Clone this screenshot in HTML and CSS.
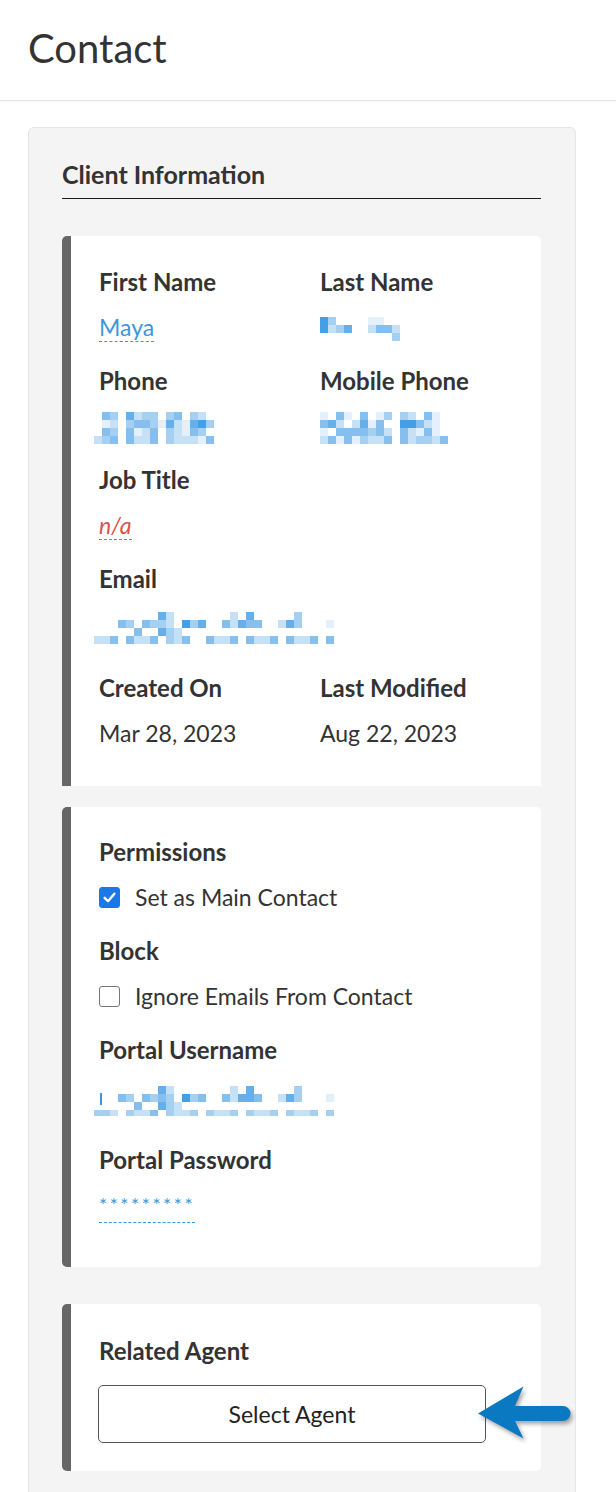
FILE: index.html
```html
<!DOCTYPE html>
<html lang="en">
<head>
<meta charset="utf-8">
<title>Contact</title>
<link rel="stylesheet" href="styles.css">
</head>
<body>
<header class="page-header">
  <h1 class="page-title">Contact</h1>
</header>
<main class="page-main">
  <section class="panel">
    <h2 class="panel-title">Client Information</h2>

    <div class="card card-info">
      <div class="grid-2">
        <div class="field">
          <div class="label">First Name</div>
          <div class="value"><span class="link">Maya</span></div>
        </div>
        <div class="field">
          <div class="label">Last Name</div>
          <div class="value value-mosaic off-6">
            <div class="mosaic m10">
              <i class="c6"></i><i class="c3"></i><i></i><i></i><i></i><i></i><i class="c1"></i><i class="c1"></i><i></i><i></i>
              <i class="c6"></i><i class="c2"></i><i class="c3"></i><i class="c5"></i><i></i><i></i><i class="c2"></i><i class="c4"></i><i class="c4"></i><i class="c2"></i>
              <i></i><i></i><i></i><i></i><i></i><i></i><i></i><i></i><i></i><i class="c3"></i>
            </div>
          </div>
        </div>
        <div class="field">
          <div class="label">Phone</div>
          <div class="value value-mosaic off-2 shift">
            <div class="mosaic m15">
              <i></i><i class="c4"></i><i class="c3"></i><i></i><i class="c5"></i><i class="c2"></i><i class="c3"></i><i class="c3"></i><i></i><i class="c3"></i><i class="c4"></i><i></i><i class="c3"></i><i class="c2"></i><i></i>
              <i></i><i class="c1"></i><i class="c2"></i><i></i><i class="c3"></i><i class="c4"></i><i class="c4"></i><i class="c3"></i><i class="c1"></i><i class="c5"></i><i class="c2"></i><i class="c1"></i><i class="c5"></i><i class="c6"></i><i class="c3"></i>
              <i></i><i class="c4"></i><i class="c3"></i><i></i><i class="c4"></i><i class="c1"></i><i class="c2"></i><i class="c4"></i><i></i><i class="c3"></i><i class="c2"></i><i class="c1"></i><i class="c4"></i><i class="c3"></i><i></i>
              <i class="c2"></i><i class="c3"></i><i class="c4"></i><i></i><i class="c4"></i><i class="c2"></i><i class="c2"></i><i class="c4"></i><i></i><i class="c3"></i><i class="c2"></i><i class="c2"></i><i class="c2"></i><i class="c1"></i><i class="c4"></i>
            </div>
          </div>
        </div>
        <div class="field">
          <div class="label">Mobile Phone</div>
          <div class="value value-mosaic off-2">
            <div class="mosaic m16">
              <i class="c1"></i><i></i><i class="c4"></i><i class="c1"></i><i></i><i class="c4"></i><i></i><i class="c1"></i><i class="c3"></i><i></i><i class="c3"></i><i class="c2"></i><i></i><i class="c4"></i><i class="c1"></i><i></i>
              <i class="c4"></i><i class="c5"></i><i class="c2"></i><i></i><i class="c2"></i><i class="c5"></i><i class="c1"></i><i class="c4"></i><i></i><i></i><i class="c6"></i><i class="c6"></i><i class="c4"></i><i class="c2"></i><i class="c1"></i><i></i>
              <i class="c1"></i><i></i><i class="c4"></i><i class="c4"></i><i class="c4"></i><i class="c4"></i><i class="c3"></i><i class="c4"></i><i class="c2"></i><i></i><i class="c4"></i><i class="c2"></i><i class="c1"></i><i class="c4"></i><i class="c1"></i><i></i>
              <i class="c2"></i><i class="c4"></i><i class="c1"></i><i class="c4"></i><i class="c1"></i><i class="c3"></i><i class="c2"></i><i class="c2"></i><i class="c4"></i><i></i><i class="c4"></i><i class="c2"></i><i class="c3"></i><i class="c3"></i><i class="c2"></i><i class="c4"></i>
            </div>
          </div>
        </div>
        <div class="field">
          <div class="label">Job Title</div>
          <div class="value"><span class="link empty">n/a</span></div>
        </div>
        <div class="field"></div>
        <div class="field field-wide field-email">
          <div class="label">Email</div>
          <div class="value value-mosaic value-tall off-4 shift">
            <div class="mosaic m30">
              <i></i><i></i><i></i><i></i><i></i><i></i><i></i><i></i><i class="c5"></i><i class="c2"></i><i></i><i></i><i></i><i></i><i></i><i></i><i></i><i class="c2"></i><i></i><i class="c5"></i><i></i><i></i><i></i><i></i><i></i><i class="c3"></i><i></i><i></i><i></i><i></i>
              <i></i><i></i><i></i><i class="c4"></i><i class="c3"></i><i></i><i class="c4"></i><i class="c3"></i><i class="c3"></i><i class="c2"></i><i></i><i class="c6"></i><i class="c3"></i><i class="c5"></i><i></i><i></i><i class="c4"></i><i class="c2"></i><i class="c5"></i><i class="c4"></i><i class="c4"></i><i></i><i></i><i class="c2"></i><i class="c5"></i><i class="c3"></i><i></i><i></i><i></i><i class="c1"></i>
              <i></i><i></i><i></i><i></i><i></i><i class="c4"></i><i></i><i></i><i class="c5"></i><i class="c3"></i><i class="c2"></i><i></i><i></i><i></i><i></i><i></i><i></i><i></i><i></i><i></i><i></i><i></i><i></i><i></i><i></i><i></i><i></i><i></i><i></i><i></i>
              <i class="c2"></i><i class="c2"></i><i class="c4"></i><i></i><i class="c4"></i><i class="c2"></i><i class="c2"></i><i class="c4"></i><i></i><i class="c3"></i><i class="c2"></i><i class="c4"></i><i></i><i></i><i class="c4"></i><i class="c2"></i><i class="c2"></i><i class="c4"></i><i></i><i class="c4"></i><i class="c2"></i><i class="c2"></i><i class="c4"></i><i></i><i class="c4"></i><i class="c2"></i><i class="c2"></i><i class="c4"></i><i></i><i class="c4"></i>
            </div>
          </div>
        </div>
        <div class="field field-last">
          <div class="label">Created On</div>
          <div class="value">Mar 28, 2023</div>
        </div>
        <div class="field field-last">
          <div class="label">Last Modified</div>
          <div class="value">Aug 22, 2023</div>
        </div>
      </div>
    </div>

    <div class="card card-perms">
      <div class="field">
        <div class="label">Permissions</div>
        <div class="check-row">
          <span class="checkbox checked"><svg viewBox="0 0 20 20" width="15" height="15"><path d="M3.5 10.5 L8 15 L16.5 5" fill="none" stroke="#fff" stroke-width="3.2" stroke-linecap="round" stroke-linejoin="round"/></svg></span>
          <span class="check-text">Set as Main Contact</span>
        </div>
      </div>
      <div class="field">
        <div class="label">Block</div>
        <div class="check-row">
          <span class="checkbox"></span>
          <span class="check-text">Ignore Emails From Contact</span>
        </div>
      </div>
      <div class="field">
        <div class="label">Portal Username</div>
        <div class="value value-user">
          <span class="caret"></span>
          <div class="mosaic m30 mosaic-user">
            <i></i><i></i><i></i><i></i><i></i><i></i><i></i><i></i><i class="c5"></i><i class="c2"></i><i></i><i></i><i></i><i></i><i></i><i></i><i></i><i class="c2"></i><i></i><i class="c5"></i><i></i><i></i><i></i><i></i><i></i><i class="c3"></i><i></i><i></i><i></i><i></i>
            <i></i><i></i><i></i><i class="c4"></i><i class="c3"></i><i></i><i class="c4"></i><i class="c3"></i><i class="c4"></i><i class="c3"></i><i></i><i class="c6"></i><i class="c3"></i><i class="c4"></i><i></i><i></i><i class="c4"></i><i class="c2"></i><i class="c5"></i><i class="c5"></i><i class="c4"></i><i></i><i></i><i class="c2"></i><i class="c5"></i><i class="c3"></i><i></i><i></i><i></i><i class="c1"></i>
            <i></i><i></i><i></i><i></i><i></i><i class="c4"></i><i></i><i></i><i class="c5"></i><i class="c3"></i><i class="c2"></i><i></i><i></i><i></i><i></i><i></i><i></i><i></i><i></i><i></i><i></i><i></i><i></i><i></i><i></i><i></i><i></i><i></i><i></i><i></i>
            <i class="c3"></i><i class="c3"></i><i class="c2"></i><i></i><i class="c3"></i><i class="c2"></i><i class="c2"></i><i class="c4"></i><i></i><i class="c3"></i><i class="c2"></i><i class="c2"></i><i class="c3"></i><i></i><i class="c3"></i><i class="c2"></i><i class="c2"></i><i class="c3"></i><i></i><i class="c3"></i><i class="c2"></i><i class="c2"></i><i class="c3"></i><i></i><i class="c3"></i><i class="c2"></i><i class="c2"></i><i class="c3"></i><i></i><i class="c3"></i>
          </div>
        </div>
      </div>
      <div class="field field-last">
        <div class="label">Portal Password</div>
        <div class="value"><span class="link password">*********</span></div>
      </div>
    </div>

    <div class="card card-agent">
      <div class="label">Related Agent</div>
      <button class="btn-select" type="button">Select Agent</button>
      <svg class="pointer-arrow" width="110" height="70" viewBox="0 0 110 70" aria-hidden="true">
        <path d="M6 33.5 L51.5 6.5 L43 26 L91 26 A7.5 7.5 0 0 1 91 41 L43 41 L51.5 58.5 Z" fill="#0b79c1"/>
      </svg>
    </div>
  </section>
</main>
</body>
</html>
```

FILE: styles.css
```css
* {
  box-sizing: border-box;
}

html, body {
  margin: 0;
  padding: 0;
  background: #ffffff;
}

body {
  font-family: Lato, "Liberation Sans", sans-serif;
  color: #333333;
  font-size: 23px;
}

.page-header {
  height: 101px;
  border-bottom: 1px solid #e4e4e4;
  box-shadow: 0 1px 2px rgba(0, 0, 0, 0.04);
  padding: 24px 0 0 28px;
}

.page-title {
  margin: 0;
  font-size: 40px;
  line-height: 48px;
  font-weight: 400;
  color: #333333;
}

.page-main {
  padding: 26px 40px 0 28px;
}

.panel {
  background: #f4f4f4;
  border: 1px solid #e6e6e6;
  border-radius: 6px;
  padding: 32px 34px 60px 33px;
}

.panel-title {
  margin: 0;
  font-size: 25px;
  line-height: 28px;
  font-weight: 700;
  color: #333333;
  padding-bottom: 10px;
  border-bottom: 1px solid #1a1a1a;
}

.card {
  background: #ffffff;
  border-left: 9px solid #666666;
  border-radius: 5px;
  padding: 30px 20px 16px 27px;
  position: relative;
}

.card-info {
  margin-top: 37px;
  border-bottom-left-radius: 0;
  border-bottom-right-radius: 0;
  padding-bottom: 15px;
}

.card-perms {
  margin-top: 21px;
  padding-top: 29px;
  padding-bottom: 24px;
}

.card-agent {
  margin-top: 37px;
  padding-top: 31px;
  padding-bottom: 28px;
}

.grid-2 {
  display: grid;
  grid-template-columns: 221px 1fr;
}

.field {
  margin-bottom: 22px;
}

.field-wide {
  grid-column: 1 / 3;
}

.field-email {
  margin-bottom: 28px;
}

.label {
  font-size: 24px;
  font-weight: 700;
  line-height: 32px;
  color: #333333;
  padding-left: 1px;
}

.value {
  margin-top: 13px;
  line-height: 32px;
  height: 32px;
  padding-left: 1px;
  white-space: nowrap;
}

.value-tall {
  height: 36px;
}

.value-mosaic {
  position: relative;
}

.off-2 { padding-top: 2px; }
.off-4 { padding-top: 4px; }
.off-6 { padding-top: 6px; }

.shift .mosaic {
  margin-left: -5px;
}

.link {
  color: #3c97d9;
  border-bottom: 1px dashed #3c97d9;
}

.link.empty {
  color: #d9534f;
  font-style: italic;
}

.password {
  font-size: 19px;
  letter-spacing: 2.6px;
  vertical-align: 2px;
  padding-bottom: 6px;
}

.mosaic {
  display: grid;
  grid-auto-rows: 8px;
}

.mosaic i {
  display: block;
}

.m10 { grid-template-columns: repeat(10, 8px); }
.m15 { grid-template-columns: repeat(15, 8px); }
.m16 { grid-template-columns: repeat(16, 8px); }
.m30 { grid-template-columns: repeat(30, 8px); }

.c1 { background: #e4f0fb; }
.c2 { background: #c6e1f6; }
.c3 { background: #a6d0f2; }
.c4 { background: #86bfee; }
.c5 { background: #66afea; }
.c6 { background: #43a0e6; }

.mosaic-user {
  grid-template-rows: 8px 8px 8px 6px;
  margin-left: -5px;
}

.value-user {
  height: 43px;
  padding-top: 7px;
  position: relative;
}

.caret {
  position: absolute;
  left: 2px;
  top: 14px;
  width: 2px;
  height: 12px;
  background: #3c97d9;
}

.check-row {
  margin-top: 13px;
  height: 32px;
  display: flex;
  align-items: center;
  gap: 15px;
  padding-left: 1px;
}

.checkbox {
  width: 21px;
  height: 21px;
  border-radius: 3px;
  border: 1.5px solid #767676;
  background: #ffffff;
  display: inline-flex;
  align-items: center;
  justify-content: center;
  flex: none;
}

.checkbox.checked {
  background: #1b78e8;
  border-color: #1b78e8;
}

.check-text {
  line-height: 32px;
  color: #333333;
}

.card-agent .label {
  margin-bottom: 18px;
}

.btn-select {
  display: block;
  width: 388px;
  height: 58px;
  margin: 0;
  background: #ffffff;
  border: 1px solid #555555;
  border-radius: 5px;
  font-family: Lato, "Liberation Sans", sans-serif;
  font-size: 23px;
  color: #222222;
  padding: 0;
}

.pointer-arrow {
  position: absolute;
  left: 401px;
  top: 76px;
  overflow: visible;
  filter: drop-shadow(2px 3px 2px rgba(0, 0, 0, 0.35));
}
```
